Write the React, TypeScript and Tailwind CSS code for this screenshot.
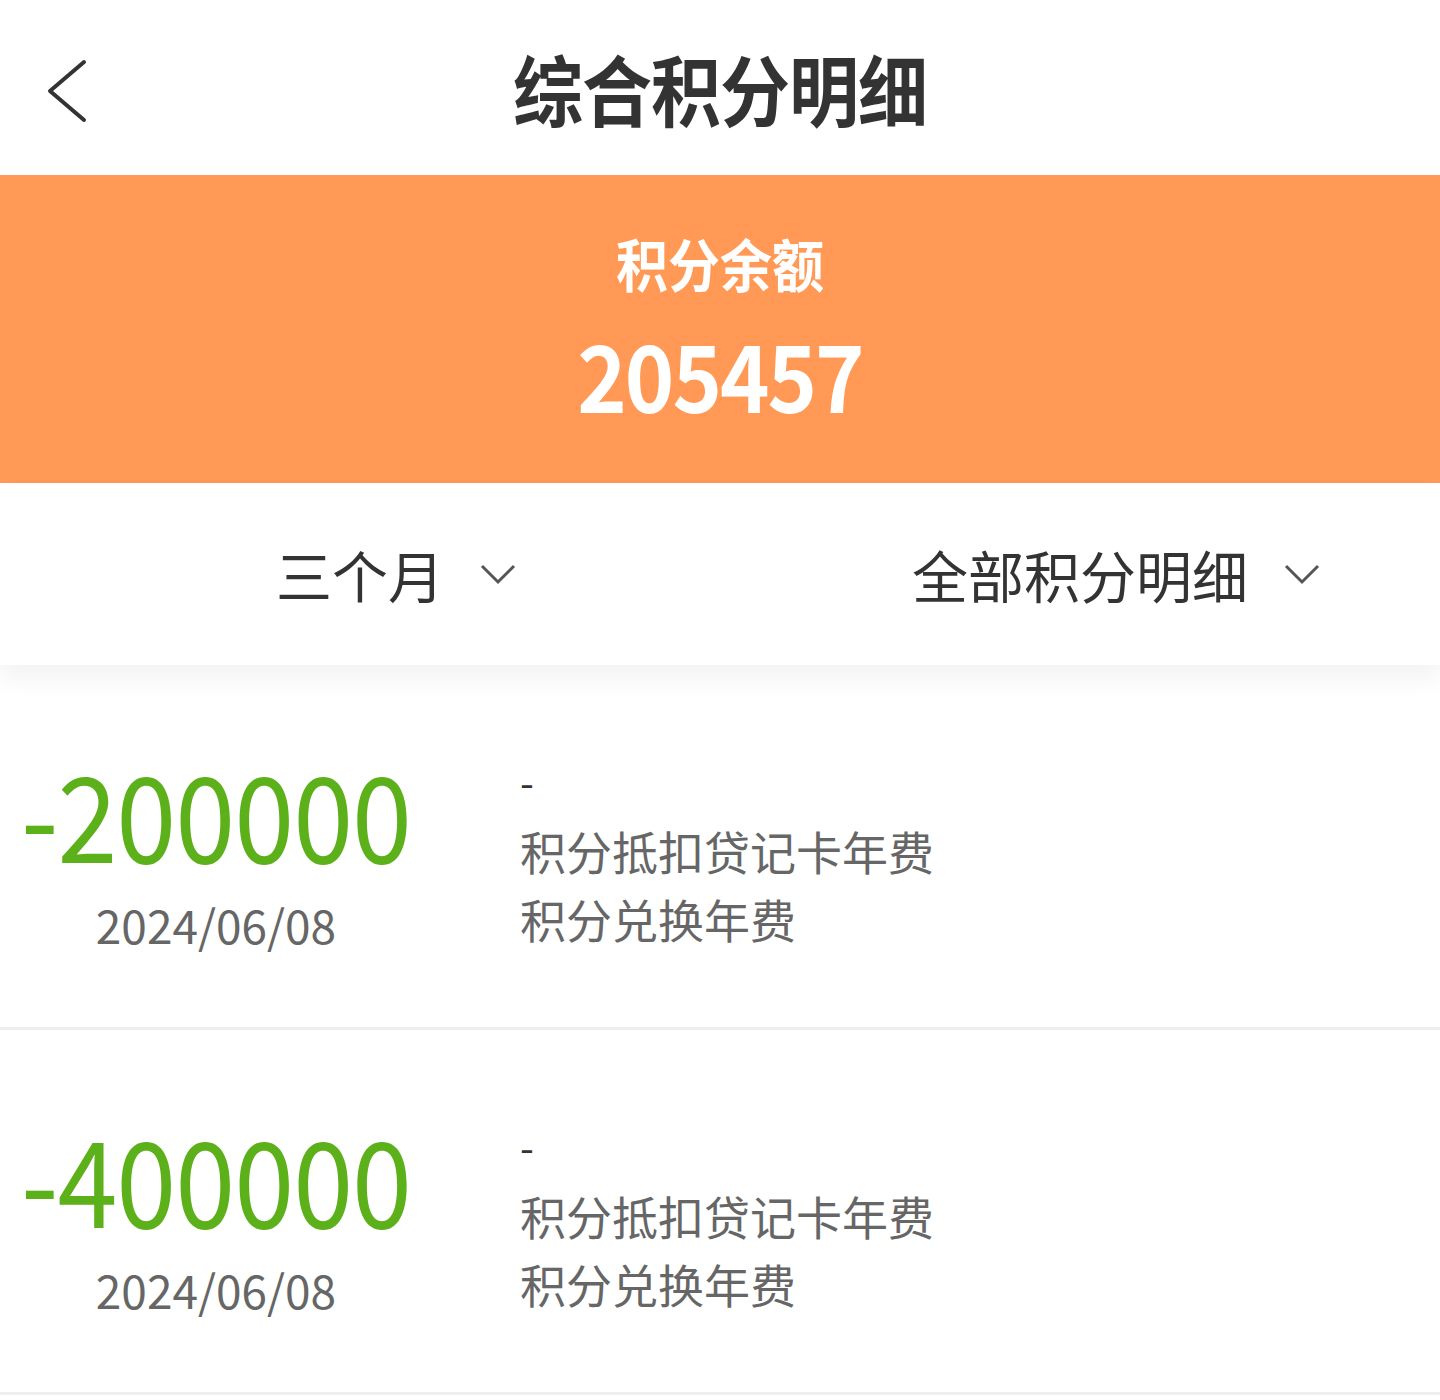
const records = [
  { amount: "-200000", date: "2024/06/08", note: "-", title: "积分抵扣贷记卡年费", desc: "积分兑换年费" },
  { amount: "-400000", date: "2024/06/08", note: "-", title: "积分抵扣贷记卡年费", desc: "积分兑换年费" },
];

const font = { fontFamily: '"Noto Sans CJK SC", "Noto Sans", sans-serif' };

function Caret() {
  return (
    <svg width="36" height="24" viewBox="0 0 36 24" fill="none" stroke="#555" strokeWidth="3" className="absolute left-full top-1/2 ml-[36px] -translate-y-1/2">
      <path d="M2 4l16 16L34 4" />
    </svg>
  );
}

export default function App() {
  return (
    <div className="w-[1440px] min-h-[1400px] bg-white" style={font}>
      {/* Header */}
      <header className="relative h-[175px] flex items-center justify-center">
        <button className="absolute left-[44px] top-[58px]">
          <svg width="46" height="66" viewBox="0 0 46 66" fill="none" stroke="#333" strokeWidth="4" strokeLinecap="round" strokeLinejoin="round">
            <path d="M40 4L6 33l34 29" />
          </svg>
        </button>
        <h1 className="text-[70px] font-bold text-[#333] tracking-[-1px] scale-y-110">综合积分明细</h1>
      </header>

      {/* Balance */}
      <section className="h-[308px] bg-[#ff9955] flex flex-col items-center text-white">
        <p className="mt-[62px] text-[52px] font-bold leading-none scale-y-110">积分余额</p>
        <p className="mt-[42px] text-[84px] font-bold leading-none tracking-[-2px] scale-y-110">205457</p>
      </section>

      {/* Filters */}
      <div className="h-[182px] grid grid-cols-2 items-center text-[56px] text-[#333] relative z-10 shadow-[0_14px_24px_rgba(0,0,0,0.05)]">
        <div className="flex justify-center">
          <span className="relative leading-none">三个月<Caret /></span>
        </div>
        <div className="flex justify-center">
          <span className="relative leading-none">全部积分明细<Caret /></span>
        </div>
      </div>

      {/* Records */}
      {records.map((r, i) => (
        <div key={i} className="h-[365px] border-b-[3px] border-[#eeeeee] flex">
          <div className="w-[500px] pl-[18px] pt-[92px] flex flex-col">
            <span className="w-[396px] text-center text-[108px] leading-none text-[#5cb01a] tracking-[-1px] scale-y-110">{r.amount}</span>
            <span className="w-[396px] mt-[36px] text-center text-[46px] leading-none text-[#666]">{r.date}</span>
          </div>
          <div className="pl-[20px] pt-[96px] flex flex-col text-[46px] leading-none text-[#666]">
            <span className="text-[40px] text-[#333]">{r.note}</span>
            <span className="mt-[26px]">{r.title}</span>
            <span className="mt-[22px]">{r.desc}</span>
          </div>
        </div>
      ))}
    </div>
  );
}
